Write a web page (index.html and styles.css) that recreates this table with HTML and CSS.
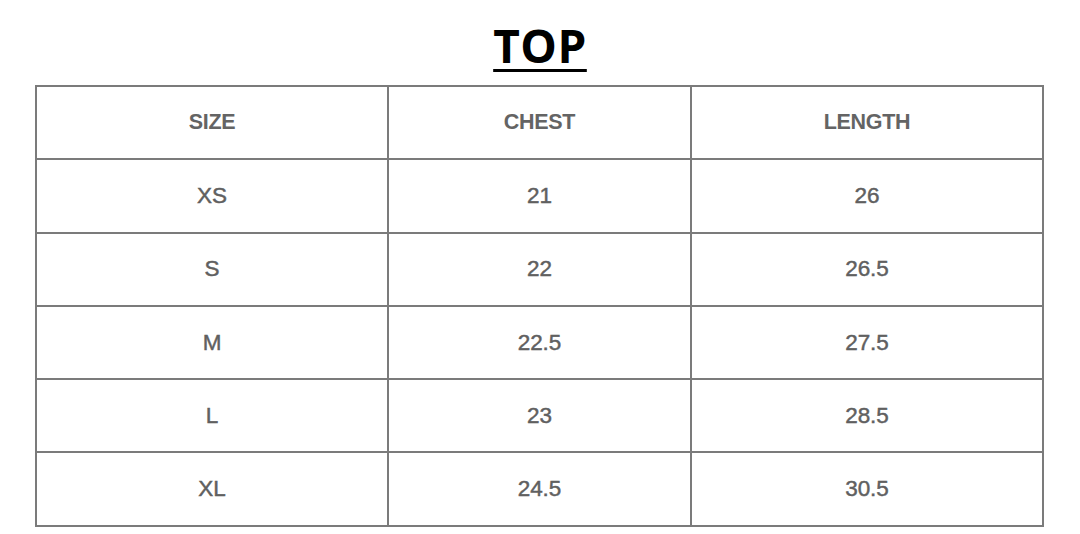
FILE: index.html
```html
<!DOCTYPE html>
<html>
<head>
<meta charset="utf-8">
<link rel="stylesheet" href="styles.css">
</head>
<body>
<div class="page">
  <h1 class="title">TOP</h1>
  <table class="chart">
    <colgroup>
      <col class="c1"><col class="c2"><col class="c3">
    </colgroup>
    <thead>
      <tr><th>SIZE</th><th>CHEST</th><th>LENGTH</th></tr>
    </thead>
    <tbody>
      <tr><td>XS</td><td>21</td><td>26</td></tr>
      <tr><td>S</td><td>22</td><td>26.5</td></tr>
      <tr><td>M</td><td>22.5</td><td>27.5</td></tr>
      <tr><td>L</td><td>23</td><td>28.5</td></tr>
      <tr><td>XL</td><td>24.5</td><td>30.5</td></tr>
    </tbody>
  </table>
</div>
</body>
</html>
```

FILE: styles.css
```css
html, body {
  margin: 0;
  padding: 0;
  background: #ffffff;
}

.page {
  width: 1080px;
  height: 534px;
  display: flex;
  flex-direction: column;
  align-items: center;
  padding-top: 17px;
  box-sizing: border-box;
}

.title {
  margin: 0;
  font-family: "Open Sans", "Liberation Sans", sans-serif;
  font-weight: 700;
  font-size: 46px;
  line-height: 56px;
  color: #000;
  text-decoration: underline;
  text-decoration-thickness: 3px;
  text-underline-offset: 6px;
  letter-spacing: 0.5px;
}

.chart {
  margin-top: 12px;
  margin-left: -1px;
  width: 1007px;
  border-collapse: collapse;
  table-layout: fixed;
  font-family: "Liberation Sans", Arial, sans-serif;
  color: #606060;
}

.c1 { width: 352px; }
.c2 { width: 303px; }
.c3 { width: 352px; }

.chart th,
.chart td {
  border: 2.5px solid #7b7b7b;
  height: 71.3px;
  padding: 0;
  text-align: center;
  vertical-align: middle;
}

.chart th {
  font-size: 21.5px;
  font-weight: 700;
  letter-spacing: -0.3px;
  color: #646464;
}

.chart td {
  font-size: 22.5px;
  font-weight: 400;
  letter-spacing: -0.1px;
  -webkit-text-stroke: 0.45px #606060;
}
```
